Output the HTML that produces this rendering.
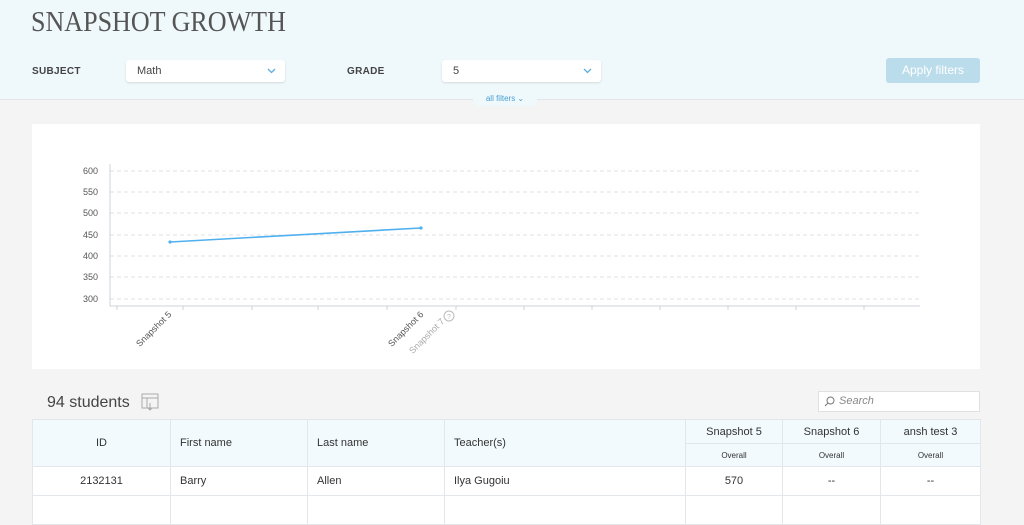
<!DOCTYPE html><html><head><style>
body{margin:0;width:1024px;height:508px;overflow:hidden;background:#f4f4f4;font-family:"Liberation Sans",sans-serif;position:relative}
.a{position:absolute}
.hdr{left:0;top:0;width:1024px;height:99px;background:#eff8fb;border-bottom:1px solid #e2e6e8}
.sel{background:#fff;border-radius:3px;box-shadow:0 1px 2px rgba(0,0,0,.12);height:22px;font-size:11px;color:#444;line-height:22px;padding-left:11px;box-sizing:border-box}
.lbl{font-size:10px;color:#444;font-weight:bold;letter-spacing:.3px}
table{border-collapse:collapse;font-size:11px;color:#333;table-layout:fixed}
td{border:1px solid #e3e7ea;padding:0;overflow:hidden;white-space:nowrap}
</style></head><body>
<div class="a hdr"></div>
<div class="a" style="left:31px;top:7px;font-family:'Liberation Serif',serif;font-size:28px;color:#555;letter-spacing:0px;transform:scaleX(0.93);transform-origin:left">SNAPSHOT GROWTH</div>
<div class="a lbl" style="left:32px;top:66px">SUBJECT</div>
<div class="a sel" style="left:126px;top:60px;width:159px">Math<svg class="a" style="right:9px;top:8px" width="9" height="6"><path d="M1 1l3.5 3.5L8 1" stroke="#5aaee0" fill="none" stroke-width="1.3"/></svg></div>
<div class="a lbl" style="left:347px;top:66px">GRADE</div>
<div class="a sel" style="left:442px;top:60px;width:159px">5<svg class="a" style="right:9px;top:8px" width="9" height="6"><path d="M1 1l3.5 3.5L8 1" stroke="#5aaee0" fill="none" stroke-width="1.3"/></svg></div>
<div class="a" style="left:886px;top:58px;width:94px;height:25px;background:#bbdceb;border-radius:3px;color:#fff;font-size:12px;text-align:center;line-height:25px">Apply filters</div>
<div class="a" style="left:473px;top:92px;width:64px;height:14px;background:#eff8fb;border-radius:0 0 6px 6px;font-size:8px;color:#4a9fd2;text-align:center;line-height:14px">all filters &#8964;</div>
<div class="a" style="left:32px;top:124px;width:948px;height:245px;background:#fff"></div>
<svg class="a" style="left:0;top:0" width="1024" height="370">
<g stroke="#dde1e6" stroke-dasharray="4 3"><path d="M110 171H920M110 192H920M110 213H920M110 235H920M110 256H920M110 277H920M110 299H920"/></g>
<path d="M110 164V306H920" stroke="#ccd3dc" fill="none"/>
<g stroke="#ccd3dc"><path d="M117 306v4M183 306v4M252 306v4M318 306v4M387 306v4M456 306v4M524 306v4M592 306v4M660 306v4M728 306v4M796 306v4M864 306v4"/></g>
<g font-size="9" fill="#555" text-anchor="end" font-family="Liberation Sans"><text x="98" y="174">600</text><text x="98" y="195">550</text><text x="98" y="216">500</text><text x="98" y="238">450</text><text x="98" y="259">400</text><text x="98" y="280">350</text><text x="98" y="302">300</text></g>
<path d="M170 242L421 228" stroke="#4fb0ee" stroke-width="1.6"/><circle cx="170" cy="242" r="1.6" fill="#4fb0ee"/><circle cx="421" cy="228" r="1.6" fill="#4fb0ee"/>
<g font-size="9" font-family="Liberation Sans" text-anchor="end"><text transform="translate(172,315) rotate(-45)" fill="#555">Snapshot 5</text><text transform="translate(424,315) rotate(-45)" fill="#555">Snapshot 6</text><text transform="translate(445,322) rotate(-45)" fill="#aaa">Snapshot 7</text></g>
<circle cx="449" cy="316" r="5" fill="none" stroke="#bbb"/><text x="449" y="319" font-size="7" fill="#bbb" text-anchor="middle">?</text>
</svg>
<div class="a" style="left:47px;top:394px;font-size:16px;color:#444">94 students</div>
<svg class="a" style="left:141px;top:393px" width="18" height="18"><rect x="1" y="1" width="16" height="14" fill="none" stroke="#aaa"/><path d="M1 5H17M6 5V15M9 10v7M7 15l2 2 2-2" stroke="#aaa" fill="none"/></svg>
<div class="a" style="left:818px;top:391px;width:162px;height:21px;background:#fff;border:1px solid #e0e0e0;box-sizing:border-box;font-size:11px;color:#888;font-style:italic;line-height:19px;padding-left:20px">Search<svg class="a" style="left:5px;top:4px" width="11" height="11"><circle cx="6.5" cy="4.5" r="3.5" fill="none" stroke="#777"/><path d="M4 7L1 10" stroke="#777"/></svg></div>
<table class="a" style="left:32px;top:419px;width:948px">
<colgroup><col style="width:138px"><col style="width:137px"><col style="width:137px"><col style="width:241px"><col style="width:97px"><col style="width:98px"><col style="width:100px"></colgroup>
<tr style="height:24px;background:#f2fafd"><td rowspan="2" style="text-align:center">ID</td><td rowspan="2" style="padding-left:9px">First name</td><td rowspan="2" style="padding-left:9px">Last name</td><td rowspan="2" style="padding-left:9px">Teacher(s)</td><td style="text-align:center">Snapshot 5</td><td style="text-align:center">Snapshot 6</td><td style="text-align:center">ansh test 3</td></tr>
<tr style="height:23px;background:#f2fafd;font-size:8px"><td style="text-align:center">Overall</td><td style="text-align:center">Overall</td><td style="text-align:center">Overall</td></tr>
<tr style="height:29px;background:#fff"><td style="text-align:center">2132131</td><td style="padding-left:9px">Barry</td><td style="padding-left:9px">Allen</td><td style="padding-left:9px">Ilya Gugoiu</td><td style="text-align:center">570</td><td style="text-align:center">--</td><td style="text-align:center">--</td></tr>
<tr style="height:29px;background:#fff"><td></td><td></td><td></td><td></td><td></td><td></td><td></td></tr>
</table>
</body></html>
